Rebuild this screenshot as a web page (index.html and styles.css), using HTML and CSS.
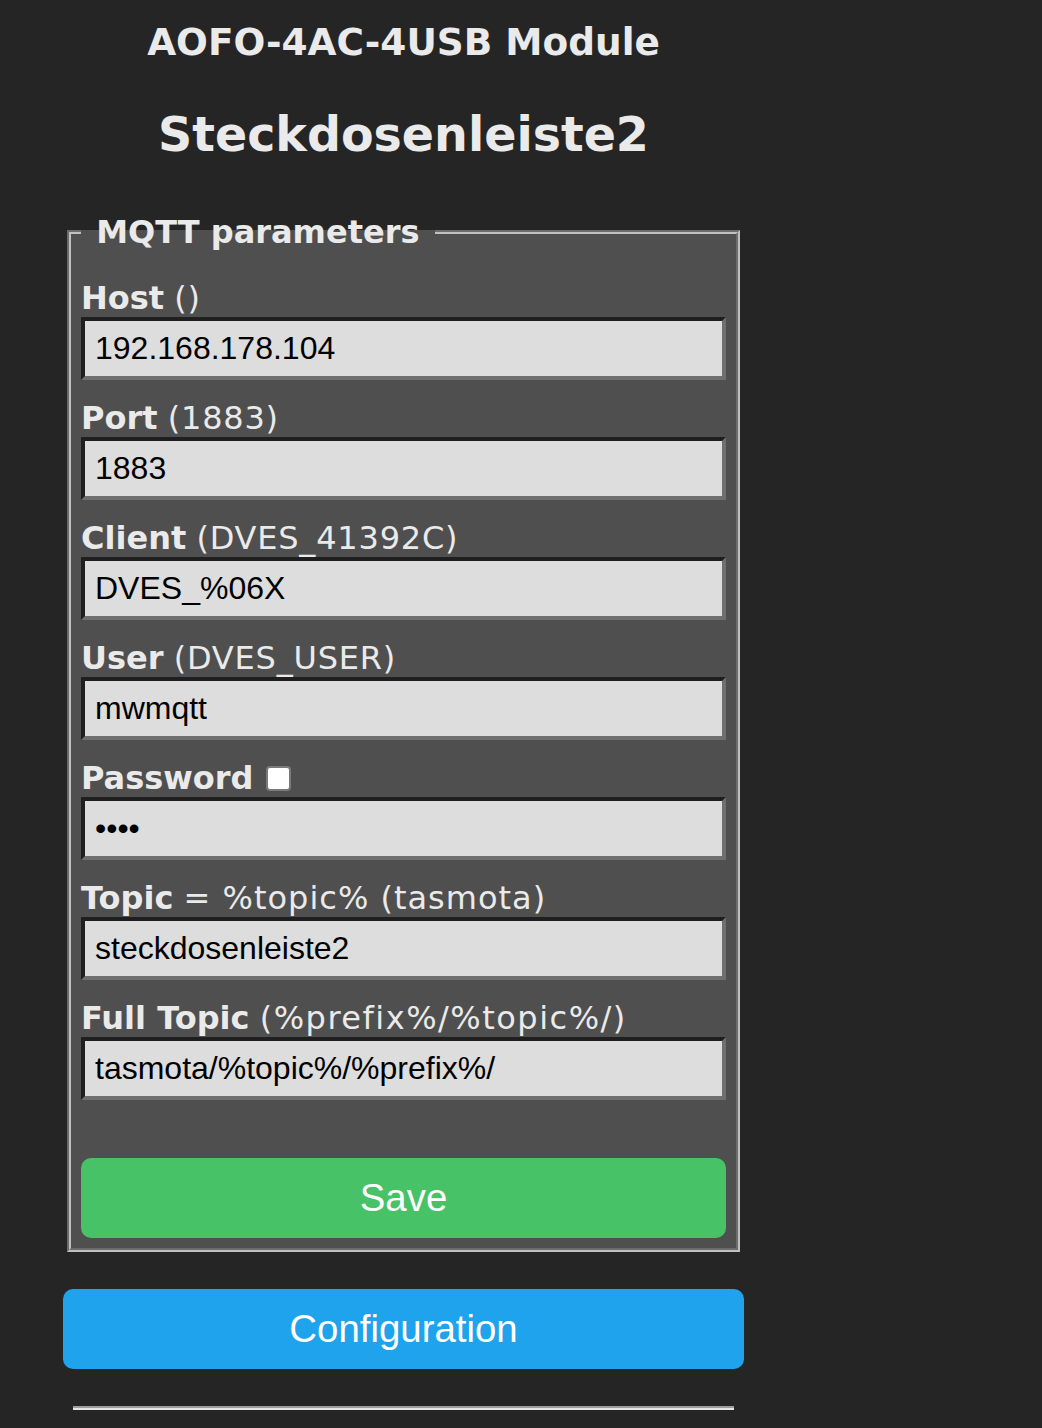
FILE: index.html
```html
<!DOCTYPE html>
<html>
<head>
<meta charset="utf-8">
<title>Steckdosenleiste2 - MQTT</title>
<link rel="stylesheet" href="styles.css">
</head>
<body>
<div class="page">
  <h3 class="title">AOFO-4AC-4USB Module</h3>
  <h2 class="subtitle">Steckdosenleiste2</h2>
  <div class="container">
    <fieldset class="box">
      <legend><b>&nbsp;MQTT parameters&nbsp;</b></legend>
      <div class="field first">
        <div class="label"><b>Host</b> <span class="note">()</span></div>
        <input class="text" type="text" value="192.168.178.104">
      </div>
      <div class="field">
        <div class="label"><b>Port</b> <span class="note">(1883)</span></div>
        <input class="text" type="text" value="1883">
      </div>
      <div class="field">
        <div class="label"><b>Client</b> <span class="note">(DVES_41392C)</span></div>
        <input class="text" type="text" value="DVES_%06X">
      </div>
      <div class="field">
        <div class="label"><b>User</b> <span class="note">(DVES_USER)</span></div>
        <input class="text" type="text" value="mwmqtt">
      </div>
      <div class="field">
        <div class="label"><b>Password</b><span class="check"></span></div>
        <input class="text" type="password" value="abcd">
      </div>
      <div class="field">
        <div class="label"><b>Topic</b> <span class="note mid">= %topic% (tasmota)</span></div>
        <input class="text" type="text" value="steckdosenleiste2">
      </div>
      <div class="field">
        <div class="label"><b>Full Topic</b> <span class="note wide">(%prefix%/%topic%/)</span></div>
        <input class="text" type="text" value="tasmota/%topic%/%prefix%/">
      </div>
      <button class="btn save" type="button">Save</button>
    </fieldset>
    <button class="btn config" type="button">Configuration</button>
    <hr class="rule">
  </div>
</div>
</body>
</html>
```
FILE: styles.css
```css
html, body {
  margin: 0;
  padding: 0;
}
body {
  background: #252525;
  color: #eaeaea;
  font-family: "DejaVu Sans", Verdana, sans-serif;
}
.page {
  width: 775px;
  margin-left: 16px;
  padding-top: 20px;
  text-align: center;
}
.title {
  margin: 0;
  font-size: 37.44px;
  font-weight: bold;
  line-height: normal;
}
.subtitle {
  margin: 43px 0 51.5px;
  font-size: 47.5px;
  font-weight: bold;
  line-height: normal;
}
.container {
  display: inline-block;
  vertical-align: top;
  width: 681px;
  text-align: left;
}
.box {
  margin: 0 4px;
  padding: 10px;
  border: 4px groove #c0c0c0;
  background: #4f4f4f;
  min-width: 0;
}
.box legend {
  padding: 0 4px;
  font-size: 32px;
  line-height: 37px;
  color: #eaeaea;
}
.field {
  margin-top: 20px;
  font-size: 32px;
}
.field.first {
  margin-top: 19.5px;
}
.label {
  height: 37px;
  line-height: 37px;
  white-space: nowrap;
}
.note {
  letter-spacing: 0.8px;
}
.note.mid {
  letter-spacing: 1px;
}
.note.wide {
  letter-spacing: 1.5px;
}
.check {
  display: inline-block;
  width: 21px;
  height: 21px;
  margin-left: 12px;
  background: #ffffff;
  border: 2px solid #7a7a7a;
  border-radius: 4px;
  vertical-align: -2px;
}
.text {
  display: block;
  width: 100%;
  height: 63px;
  box-sizing: border-box;
  margin: 0;
  padding: 0 10px;
  border-style: solid;
  border-width: 4px;
  border-color: #1f1f1f #6f6f6f #6f6f6f #1f1f1f;
  background: #dddddd;
  color: #000000;
  font-family: "Liberation Sans", Arial, sans-serif;
  font-size: 32px;
  outline: none;
}
.btn {
  display: block;
  width: 100%;
  margin: 0;
  padding: 0;
  border: 0;
  border-radius: 10px;
  color: #ffffff;
  font-family: "Liberation Sans", Arial, sans-serif;
  font-size: 38.4px;
  line-height: 80px;
  height: 80px;
  text-align: center;
}
.save {
  margin-top: 58px;
  background: #47c266;
}
.config {
  margin-top: 37px;
  background: #1fa3ec;
}
.rule {
  margin: 37px 10px 0;
  height: 0;
  border: 0;
  border-top: 2px solid #9d9d9d;
  border-bottom: 2px solid #e6e6e6;
}
```
